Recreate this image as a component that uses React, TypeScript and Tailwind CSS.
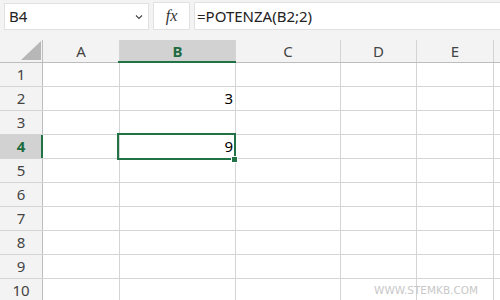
import React from "react";

const cols = [
  { name: "A", w: "w-[77px]" },
  { name: "B", w: "w-[116px]" },
  { name: "C", w: "w-[105px]" },
  { name: "D", w: "w-[76px]" },
  { name: "E", w: "w-[77px]" },
];

const rows = [1, 2, 3, 4, 5, 6, 7, 8, 9, 10];

const values: Record<string, string> = { B2: "3", B4: "9" };

export default function App() {
  return (
    <div
      className="relative w-[500px] h-[300px] overflow-hidden bg-white text-[#222]"
      style={{ fontFamily: '"Noto Sans", "Open Sans", sans-serif' }}
    >
      {/* formula bar */}
      <div className="h-[40px] bg-[#f3f3f3] flex items-start pt-[2px] pl-[4px]">
        <div className="mt-[1px] w-[145px] h-[27px] bg-white border border-[#e1e1e1] flex items-center justify-between pl-[4px] pr-[4px]">
          <span className="text-[15px] text-[#222] leading-none">B4</span>
          <svg width="10" height="10" viewBox="0 0 10 10">
            <path d="M2 3.5 L5 6.5 L8 3.5" fill="none" stroke="#444" strokeWidth="1.1" />
          </svg>
        </div>
        <div className="ml-[4px] w-[37px] h-[28px] bg-white border border-[#e1e1e1] flex items-center justify-center">
          <span
            className="text-[16px] italic text-[#333] leading-none"
            style={{ fontFamily: '"Liberation Serif", "DejaVu Serif", serif' }}
          >
            fx
          </span>
        </div>
        <div className="ml-[4px] flex-1 h-[28px] bg-white border border-[#e1e1e1] border-r-0 flex items-center pl-[2px]">
          <span className="text-[15px] text-[#222] leading-none">=POTENZA(B2;2)</span>
        </div>
      </div>

      {/* column headers */}
      <div className="flex h-[23px] bg-[#f3f3f3] border-b border-[#bdbdbd]">
        <div className="relative w-[43px] h-full border-r border-[#bdbdbd]">
          <svg width="21" height="20" viewBox="0 0 21 20" className="absolute left-[21px] top-[1px]">
            <polygon points="20,0 20,19 0,19" fill="#b7b7b7" />
          </svg>
        </div>
        {cols.map((c) => {
          const sel = c.name === "B";
          return (
            <div
              key={c.name}
              className={`relative ${c.w} h-full flex items-center justify-center border-r border-[#d4d4d4] text-[15px] ${
                sel ? "bg-[#d2d2d2] text-[#1e6b3f] font-bold" : "text-[#444]"
              }`}
            >
              {c.name}
              {sel && (
                <div className="absolute left-[-2px] right-[-1px] bottom-[-1px] h-[2px] bg-[#217346]" />
              )}
            </div>
          );
        })}
        <div className="flex-1 h-full" />
      </div>

      {/* rows */}
      {rows.map((r) => {
        const sel = r === 4;
        return (
          <div key={r} className="flex h-[24px] border-b border-[#d4d4d4]">
            <div
              className={`relative w-[43px] h-full flex items-center justify-center text-[15px] ${
                sel
                  ? "bg-[#d2d2d2] text-[#1e6b3f] font-bold border-r-2 border-[#217346] pl-[1px]"
                  : "bg-[#f3f3f3] text-[#444] border-r border-[#bdbdbd]"
              }`}
            >
              {r}
            </div>
            {cols.map((c) => (
              <div
                key={c.name}
                className={`${c.w} h-full border-r border-[#d4d4d4] flex items-center justify-end pr-[2px] text-[15px] text-black`}
              >
                {values[`${c.name}${r}`] ?? ""}
              </div>
            ))}
            <div className="flex-1 h-full" />
          </div>
        );
      })}

      {/* selection */}
      <div className="absolute left-[117px] top-[133px] w-[119px] h-[27px] border-2 border-[#217346]" />
      <div className="absolute left-[231px] top-[156px] w-[7px] h-[7px] bg-[#217346] border border-white" />

      {/* watermark */}
      <div
        className="absolute left-[374px] top-[285px] text-[10.5px] text-[#c8c8c8] leading-none"
        style={{ fontFamily: '"DejaVu Sans", sans-serif' }}
      >
        WWW.STEMKB.COM
      </div>
    </div>
  );
}
